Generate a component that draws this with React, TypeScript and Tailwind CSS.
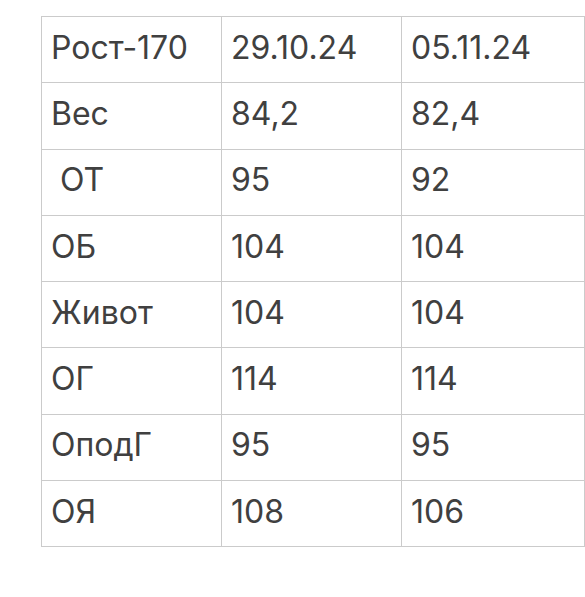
const rows: [string, string, string][] = [
  ["Рост-170", "29.10.24", "05.11.24"],
  ["Вес", "84,2", "82,4"],
  ["\u00a0ОТ", "95", "92"],
  ["ОБ", "104", "104"],
  ["Живот", "104", "104"],
  ["ОГ", "114", "114"],
  ["ОподГ", "95", "95"],
  ["ОЯ", "108", "106"],
];

export default function App() {
  return (
    <div className="w-[585px] h-[597px] bg-white pt-4 pl-[41px] font-['Inter',sans-serif] text-[#404040] overflow-hidden">
      <table className="border-collapse table-fixed w-[543px]">
        <tbody>
          {rows.map((r, i) => (
            <tr key={i} className="h-[66.3px]">
              {r.map((c, j) => (
                <td
                  key={j}
                  className={`border border-[#cbcbcb] pl-[9px] pb-[4px] text-[32px] leading-none align-middle ${j === 2 ? "w-[183px]" : "w-[180px]"}`}
                >
                  {c}
                </td>
              ))}
            </tr>
          ))}
        </tbody>
      </table>
    </div>
  );
}
